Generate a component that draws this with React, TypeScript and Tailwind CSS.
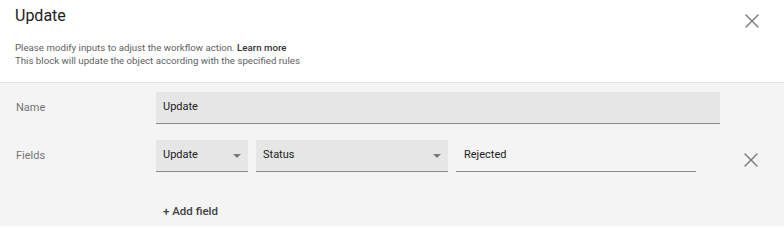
import { X } from 'lucide-react'

function Caret() {
  return (
    <svg width="8" height="4" viewBox="0 0 8 4" className="shrink-0">
      <path d="M0 0 L8 0 L4 4 Z" fill="#7a7a7a" />
    </svg>
  )
}

function SelectBox({ value, width }: { value: string; width: string }) {
  return (
    <div className={`${width} h-[32px] flex items-center justify-between pl-[7px] pr-[7px] bg-[#e6e6e6] border-b border-[#8c8c8c]`}>
      <span className="text-[11px] text-[#212121]">{value}</span>
      <Caret />
    </div>
  )
}

export default function App() {
  return (
    <div className="w-[784px] h-[226px] bg-[#f4f4f4] font-['Roboto',sans-serif] overflow-hidden">
      <div className="h-[83px] bg-white border-b border-[#e4e4e4] flex justify-between pl-[15px] pr-[20px]">
        <div>
          <h1 className="text-[16px] leading-[20px] pt-[6px] text-[#212121]">Update</h1>
          <p className="mt-[15px] text-[9.7px] leading-[13px] text-[#616161]">
            Please modify inputs to adjust the workflow action.{' '}
            <span className="font-medium text-[#333333]">Learn more</span>
          </p>
          <p className="text-[9.7px] leading-[13px] text-[#616161]">
            This block will update the object according with the specified rules
          </p>
        </div>
        <button className="mt-[9px] h-[24px] text-[#7a7a7a]">
          <X size={24} strokeWidth={1.4} />
        </button>
      </div>

      <div className="pt-[9px]">
        <div className="flex items-center">
          <div className="w-[156px] pl-[16px] text-[11px] text-[#757575]">Name</div>
          <div className="w-[564px] h-[32px] flex items-center pl-[7px] bg-[#e6e6e6] border-b border-[#8c8c8c]">
            <span className="text-[11px] text-[#212121]">Update</span>
          </div>
        </div>

        <div className="flex items-center mt-[16px]">
          <div className="w-[156px] pl-[16px] text-[11px] text-[#757575]">Fields</div>
          <div className="flex gap-[8px]">
            <SelectBox value="Update" width="w-[92px]" />
            <SelectBox value="Status" width="w-[192px]" />
            <div className="w-[240px] h-[32px] flex items-center pl-[8px] border-b border-[#8c8c8c]">
              <span className="text-[11px] text-[#212121]">Rejected</span>
            </div>
          </div>
          <button className="ml-[43px] mt-[8px] text-[#7a7a7a]">
            <X size={24} strokeWidth={1.4} />
          </button>
        </div>

        <div className="pl-[163px] mt-[32px] text-[11.5px] leading-[14px] font-medium text-[#424242]">
          + Add field
        </div>
      </div>
    </div>
  )
}
